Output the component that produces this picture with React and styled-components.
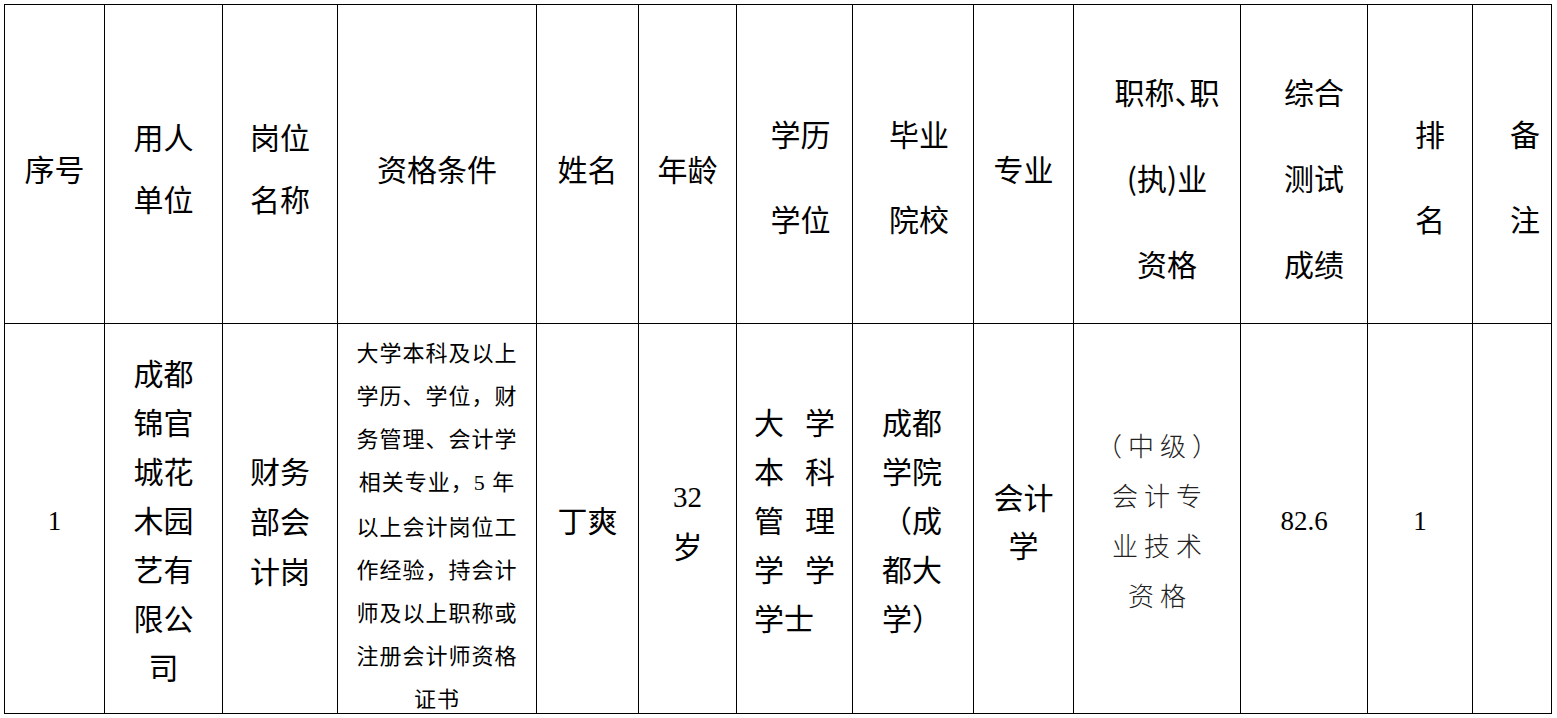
import styled, { createGlobalStyle } from "styled-components";

const GlobalStyle = createGlobalStyle`
  html, body {
    margin: 0;
    padding: 0;
    background: #ffffff;
  }
  body {
    font-family: "Noto Sans CJK SC", "Noto Sans", sans-serif;
    color: #000;
  }
`;

// column widths taken from the ruled grid
const columns = [100, 118, 115, 199, 102, 98, 116, 121, 100, 167, 127, 105, 79];

const Page = styled.div`
  padding: 4px 0 0 4px;
`;

const Table = styled.table`
  border-collapse: collapse;
  table-layout: fixed;
  width: 1548px;
  border: 1px solid #000;
`;

const HeadRow = styled.tr`
  height: 319px;
`;

const BodyRow = styled.tr`
  height: 389px;
`;

const HeadCell = styled.td`
  border: 1px solid #000;
  padding: ${(p) => p.$top ?? 7}px 0 0 ${(p) => p.$left || 0}px;
  text-align: center;
  vertical-align: middle;
  font-size: 30px;
  line-height: ${(p) => p.$lh || 40}px;
  white-space: nowrap;
`;

const BodyCell = styled.td`
  border: 1px solid #000;
  padding: ${(p) => p.$top ?? 2}px ${(p) => p.$right || 0}px 0 ${(p) => p.$left || 0}px;
  text-align: ${(p) => p.$align || "center"};
  vertical-align: middle;
  font-size: 30px;
  line-height: ${(p) => p.$lh || 49}px;
  white-space: nowrap;
`;

const Line = styled.span`
  display: ${(p) => (p.$spread ? "flex" : "block")};
  justify-content: space-between;
`;

const Num = styled.span`
  font-family: "Liberation Serif", "Times New Roman", serif;
  font-size: ${(p) => p.$size || 27}px;
`;

const SmallText = styled.div`
  font-size: 22px;
  line-height: 43px;
  letter-spacing: 1px;
  margin-bottom: -6px;
`;

const SongText = styled.div`
  font-size: 26px;
  line-height: 50px;
  letter-spacing: 6px;
  padding-left: 6px;
  font-weight: 300;
  color: #222;
`;

const Comma = styled.span`
  font-feature-settings: "halt";
`;

function Lines({ items, spread }) {
  return items.map((t, i) => (
    <Line key={i} $spread={spread && i < items.length - 1}>
      {spread && i < items.length - 1
        ? t.split("").map((c, j) => <span key={j}>{c}</span>)
        : t}
    </Line>
  ));
}

const qualification = [
  "大学本科及以上",
  "学历、学位，财",
  "务管理、会计学",
  <>
    相关专业，<Num $size={22}>5 </Num>年
  </>,
  "以上会计岗位工",
  "作经验，持会计",
  "师及以上职称或",
  "注册会计师资格",
  "证书",
];

export default function App() {
  return (
    <>
      <GlobalStyle />
      <Page>
        <Table>
          <colgroup>
            {columns.map((w, i) => (
              <col key={i} style={{ width: w }} />
            ))}
          </colgroup>
          <tbody>
            <HeadRow>
              <HeadCell>序号</HeadCell>
              <HeadCell $lh={62} $top={5}>
                <Lines items={["用人", "单位"]} />
              </HeadCell>
              <HeadCell $lh={62} $top={5}>
                <Lines items={["岗位", "名称"]} />
              </HeadCell>
              <HeadCell>资格条件</HeadCell>
              <HeadCell>姓名</HeadCell>
              <HeadCell>年龄</HeadCell>
              <HeadCell $lh={85} $top={24} $left={12}>
                <Lines items={["学历", "学位"]} />
              </HeadCell>
              <HeadCell $lh={85} $top={24} $left={12}>
                <Lines items={["毕业", "院校"]} />
              </HeadCell>
              <HeadCell>专业</HeadCell>
              <HeadCell $lh={86} $top={25} $left={20}>
                <Lines
                  items={[
                    <>
                      职称<Comma>、</Comma>职
                    </>,
                    "(执)业",
                    "资格",
                  ]}
                />
              </HeadCell>
              <HeadCell $lh={86} $top={25} $left={20}>
                <Lines items={["综合", "测试", "成绩"]} />
              </HeadCell>
              <HeadCell $lh={85} $top={24} $left={20}>
                <Lines items={["排", "名"]} />
              </HeadCell>
              <HeadCell $lh={85} $top={24} $left={26}>
                <Lines items={["备", "注"]} />
              </HeadCell>
            </HeadRow>
            <BodyRow>
              <BodyCell>
                <Num>1</Num>
              </BodyCell>
              <BodyCell>
                <Lines
                  items={["成都", "锦官", "城花", "木园", "艺有", "限公", "司"]}
                />
              </BodyCell>
              <BodyCell $lh={50}>
                <Lines items={["财务", "部会", "计岗"]} />
              </BodyCell>
              <BodyCell $top={6}>
                <SmallText>
                  <Lines items={qualification} />
                </SmallText>
              </BodyCell>
              <BodyCell>丁爽</BodyCell>
              <BodyCell $lh={48}>
                <Line>
                  <Num $size={29}>32</Num>
                </Line>
                <Line>岁</Line>
              </BodyCell>
              <BodyCell $align="left" $left={17} $right={17}>
                <Lines
                  spread
                  items={["大学", "本科", "管理", "学学", "学士"]}
                />
              </BodyCell>
              <BodyCell $align="left" $left={29}>
                <Lines items={["成都", "学院", "（成", "都大", "学）"]} />
              </BodyCell>
              <BodyCell $lh={48}>
                <Lines items={["会计", "学"]} />
              </BodyCell>
              <BodyCell>
                <SongText>
                  <Lines items={["（中级）", "会计专", "业技术", "资格"]} />
                </SongText>
              </BodyCell>
              <BodyCell>
                <Num>82.6</Num>
              </BodyCell>
              <BodyCell>
                <Num>1</Num>
              </BodyCell>
              <BodyCell />
            </BodyRow>
          </tbody>
        </Table>
      </Page>
    </>
  );
}
